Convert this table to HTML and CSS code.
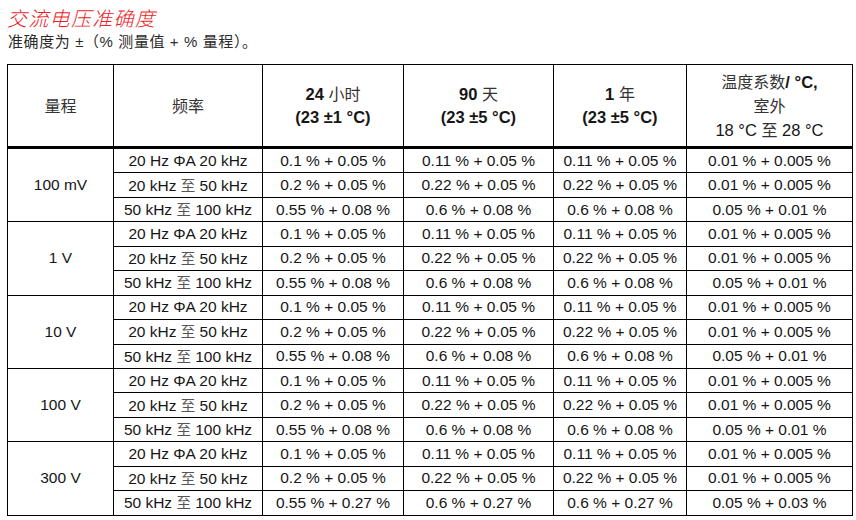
FILE: index.html
```html
<!DOCTYPE html>
<html lang="zh">
<head>
<meta charset="utf-8">
<title>交流电压准确度</title>
<link rel="stylesheet" href="styles.css">
</head>
<body>
<h1 class="title">交流电压准确度</h1>
<p class="note">准确度为 ±（% 测量值 + % 量程）。</p>
<table class="spec">
  <colgroup>
    <col class="c-range"><col class="c-freq"><col class="c-24h"><col class="c-90d"><col class="c-1y"><col class="c-temp">
  </colgroup>
  <thead>
    <tr>
      <th><span class="cjk">量程</span></th>
      <th><span class="cjk">频率</span></th>
      <th><b>24</b> <span class="cjk">小时</span><br><b>(23 ±1 °C)</b></th>
      <th><b>90</b> <span class="cjk">天</span><br><b>(23 ±5 °C)</b></th>
      <th><b>1</b> <span class="cjk">年</span><br><b>(23 ±5 °C)</b></th>
      <th><span class="cjk">温度系数</span><b>/ °C,</b><br><span class="cjk">室外</span><br><span class="reg">18 °C <span class="cjk">至</span> 28 °C</span></th>
    </tr>
  </thead>
  <tbody>
    <tr class="grp"><td rowspan="3" class="rng">100 mV</td><td>20 Hz ΦA 20 kHz</td><td>0.1 % + 0.05 %</td><td>0.11 % + 0.05 %</td><td>0.11 % + 0.05 %</td><td>0.01 % + 0.005 %</td></tr>
    <tr><td>20 kHz <span class="cjk">至</span> 50 kHz</td><td>0.2 % + 0.05 %</td><td>0.22 % + 0.05 %</td><td>0.22 % + 0.05 %</td><td>0.01 % + 0.005 %</td></tr>
    <tr><td>50 kHz <span class="cjk">至</span> 100 kHz</td><td>0.55 % + 0.08 %</td><td>0.6 % + 0.08 %</td><td>0.6 % + 0.08 %</td><td>0.05 % + 0.01 %</td></tr>

    <tr class="grp"><td rowspan="3" class="rng">1 V</td><td>20 Hz ΦA 20 kHz</td><td>0.1 % + 0.05 %</td><td>0.11 % + 0.05 %</td><td>0.11 % + 0.05 %</td><td>0.01 % + 0.005 %</td></tr>
    <tr><td>20 kHz <span class="cjk">至</span> 50 kHz</td><td>0.2 % + 0.05 %</td><td>0.22 % + 0.05 %</td><td>0.22 % + 0.05 %</td><td>0.01 % + 0.005 %</td></tr>
    <tr><td>50 kHz <span class="cjk">至</span> 100 kHz</td><td>0.55 % + 0.08 %</td><td>0.6 % + 0.08 %</td><td>0.6 % + 0.08 %</td><td>0.05 % + 0.01 %</td></tr>

    <tr class="grp"><td rowspan="3" class="rng">10 V</td><td>20 Hz ΦA 20 kHz</td><td>0.1 % + 0.05 %</td><td>0.11 % + 0.05 %</td><td>0.11 % + 0.05 %</td><td>0.01 % + 0.005 %</td></tr>
    <tr><td>20 kHz <span class="cjk">至</span> 50 kHz</td><td>0.2 % + 0.05 %</td><td>0.22 % + 0.05 %</td><td>0.22 % + 0.05 %</td><td>0.01 % + 0.005 %</td></tr>
    <tr><td>50 kHz <span class="cjk">至</span> 100 kHz</td><td>0.55 % + 0.08 %</td><td>0.6 % + 0.08 %</td><td>0.6 % + 0.08 %</td><td>0.05 % + 0.01 %</td></tr>

    <tr class="grp"><td rowspan="3" class="rng">100 V</td><td>20 Hz ΦA 20 kHz</td><td>0.1 % + 0.05 %</td><td>0.11 % + 0.05 %</td><td>0.11 % + 0.05 %</td><td>0.01 % + 0.005 %</td></tr>
    <tr><td>20 kHz <span class="cjk">至</span> 50 kHz</td><td>0.2 % + 0.05 %</td><td>0.22 % + 0.05 %</td><td>0.22 % + 0.05 %</td><td>0.01 % + 0.005 %</td></tr>
    <tr><td>50 kHz <span class="cjk">至</span> 100 kHz</td><td>0.55 % + 0.08 %</td><td>0.6 % + 0.08 %</td><td>0.6 % + 0.08 %</td><td>0.05 % + 0.01 %</td></tr>

    <tr class="grp"><td rowspan="3" class="rng">300 V</td><td>20 Hz ΦA 20 kHz</td><td>0.1 % + 0.05 %</td><td>0.11 % + 0.05 %</td><td>0.11 % + 0.05 %</td><td>0.01 % + 0.005 %</td></tr>
    <tr><td>20 kHz <span class="cjk">至</span> 50 kHz</td><td>0.2 % + 0.05 %</td><td>0.22 % + 0.05 %</td><td>0.22 % + 0.05 %</td><td>0.01 % + 0.005 %</td></tr>
    <tr><td>50 kHz <span class="cjk">至</span> 100 kHz</td><td>0.55 % + 0.27 %</td><td>0.6 % + 0.27 %</td><td>0.6 % + 0.27 %</td><td>0.05 % + 0.03 %</td></tr>
  </tbody>
</table>
</body>
</html>
```

FILE: styles.css
```css
html, body {
  background: #ffffff;
}
body {
  margin: 0;
  padding: 5px 5px 0 7px;
  font-family: "Liberation Sans", "Noto Sans CJK SC", sans-serif;
  color: #161616;
}
.title {
  margin: 0;
  font-family: "Noto Sans CJK SC", sans-serif;
  font-size: 20px;
  font-weight: 300;
  font-style: italic;
  line-height: 26px;
  color: #ee1c25;
  letter-spacing: 1.3px;
}
.note {
  margin: 1px 0 0 1px;
  font-size: 15px;
  line-height: 20px;
  color: #2b2b2b;
  letter-spacing: 0.6px;
}
.spec {
  margin-top: 12px;
  width: 845px;
  border-collapse: collapse;
  table-layout: fixed;
}
.c-range { width: 106px; }
.c-freq { width: 149px; }
.c-24h { width: 141px; }
.c-90d { width: 150px; }
.c-1y { width: 133px; }
.c-temp { width: 166px; }
.spec th, .spec td {
  border: 1px solid #000;
  text-align: center;
  vertical-align: middle;
  padding: 0;
}
.spec th {
  height: 81px;
  font-size: 16.5px;
  font-weight: normal;
  line-height: 23px;
  border-bottom: 3px solid #000;
}
.spec th b {
  font-weight: bold;
}
.cjk {
  font-family: "Noto Sans CJK SC", sans-serif;
  color: #333;
}
.spec th .cjk {
  font-size: 16px;
}
.spec td {
  height: 23.45px;
  font-size: 15.5px;
  line-height: 20px;
  white-space: nowrap;
}
.spec td .cjk {
  font-size: 14.5px;
  color: #555;
}
```
